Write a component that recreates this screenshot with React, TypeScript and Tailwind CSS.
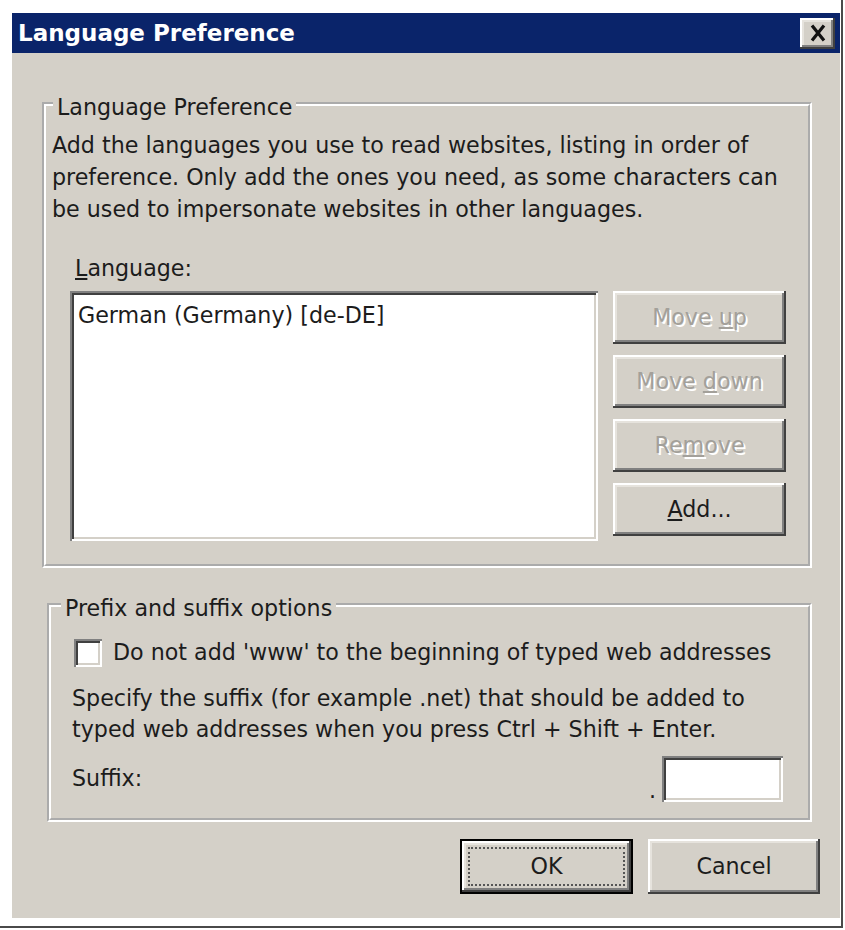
import React from 'react';

const raised =
  'bg-[#d4d0c8] shadow-[inset_-2px_-2px_0_#404040,inset_2px_2px_0_#ffffff,inset_-4px_-4px_0_#808080,inset_4px_4px_0_#e6e3dd]';
const sunken =
  'bg-white shadow-[inset_2px_2px_0_#808080,inset_-2px_-2px_0_#ffffff,inset_4px_4px_0_#404040,inset_-4px_-4px_0_#d4d0c8]';

function SideButton({ children, disabled }: { children: React.ReactNode; disabled?: boolean }) {
  return (
    <div
      className={`${raised} h-[53px] flex items-center justify-center ${
        disabled ? 'text-[#a3a09a] [text-shadow:2px_2px_0_#ffffff]' : 'text-[#1c1c1c]'
      }`}
    >
      <span>{children}</span>
    </div>
  );
}

export default function App() {
  return (
    <div className="w-[845px] h-[930px] bg-white font-['DejaVu_Sans',sans-serif] text-[22.2px] text-[#1c1c1c]">
      <div className="w-[843px] h-[928px] border-r-2 border-b-2 border-[#4a4a4a] pl-[12px] pt-[13px]">
        <div className="w-[828px] h-[905px] flex flex-col bg-[#d4d0c8]">
          {/* title bar */}
          <div className="h-[40px] bg-[#0a246a] flex items-center justify-between pl-[6px] pr-[5px]">
            <span className="text-white font-bold text-[23px] leading-none">Language Preference</span>
            <div className={`${raised} w-[35px] h-[31px] flex items-center justify-center`}>
              <svg width="22" height="22" viewBox="0 0 22 22">
                <path d="M5 3.5 L17 18.5 M17 3.5 L5 18.5" stroke="#111" strokeWidth="3.2" fill="none" />
              </svg>
            </div>
          </div>

          <div className="flex-1 flex flex-col pl-[30px] pr-[28px] pt-[35px]">
            {/* language group */}
            <fieldset className="[border-style:groove] border-4 border-white pl-[7px] pr-[10px] pb-[23px]">
              <legend className="px-[4px] pt-[6px] leading-[26px] bg-[#d4d0c8]">Language Preference</legend>
              <p className="mt-[9px] leading-[32px] -ml-px">
                <span className="block whitespace-nowrap">Add the languages you use to read websites, listing in order of</span>
                <span className="block whitespace-nowrap">preference. Only add the ones you need, as some characters can</span>
                <span className="block whitespace-nowrap">be used to impersonate websites in other languages.</span>
              </p>
              <div className="mt-[27px] pl-[22px] leading-[32px]">
                <u>L</u>anguage:
              </div>
              <div className="mt-[7px] pl-[17px] flex gap-[15px]">
                <div className={`${sunken} w-[528px] h-[250px] pl-[8px] pt-[10px] leading-[28px]`}>
                  German (Germany) [de-DE]
                </div>
                <div className="w-[173px] flex flex-col gap-[11px]">
                  <SideButton disabled>
                    Move <u>u</u>p
                  </SideButton>
                  <SideButton disabled>
                    Move <u>d</u>own
                  </SideButton>
                  <SideButton disabled>
                    Re<u>m</u>ove
                  </SideButton>
                  <SideButton>
                    <u>A</u>dd...
                  </SideButton>
                </div>
              </div>
            </fieldset>

            {/* prefix/suffix group */}
            <fieldset className="mt-[21px] ml-[5px] [border-style:groove] border-4 border-white pl-[10px] pr-[25px] pb-[16px]">
              <legend className="px-[4px] pt-[6px] leading-[26px] bg-[#d4d0c8]">Prefix and suffix options</legend>
              <div className="mt-[16px] ml-[13px] h-[32px] flex items-center gap-[11px]">
                <div className={`${sunken} w-[28px] h-[28px]`} />
                <span className="whitespace-nowrap">Do not add 'www' to the beginning of typed web addresses</span>
              </div>
              <p className="mt-[14px] ml-[11px] leading-[31px]">
                <span className="block whitespace-nowrap">Specify the suffix (for example .net) that should be added to</span>
                <span className="block whitespace-nowrap">typed web addresses when you press Ctrl + Shift + Enter.</span>
              </p>
              <div className="mt-[11px] ml-[11px] flex items-center">
                <span>Suffix:</span>
                <div className="ml-auto flex items-end gap-[6px]">
                  <span className="leading-[24px]">.</span>
                  <div className={`${sunken} w-[121px] h-[46px]`} />
                </div>
              </div>
            </fieldset>

            {/* dialog buttons */}
            <div className="mt-[17px] -mr-[8px] flex justify-end gap-[15px]">
              <div className="w-[173px] h-[55px] border-2 border-black">
                <div className={`${raised} h-full p-[6px]`}>
                  <div className="h-full border-2 border-dotted border-[#555] flex items-center justify-center">
                    OK
                  </div>
                </div>
              </div>
              <div className={`${raised} w-[172px] h-[55px] flex items-center justify-center`}>Cancel</div>
            </div>
          </div>
        </div>
      </div>
    </div>
  );
}
